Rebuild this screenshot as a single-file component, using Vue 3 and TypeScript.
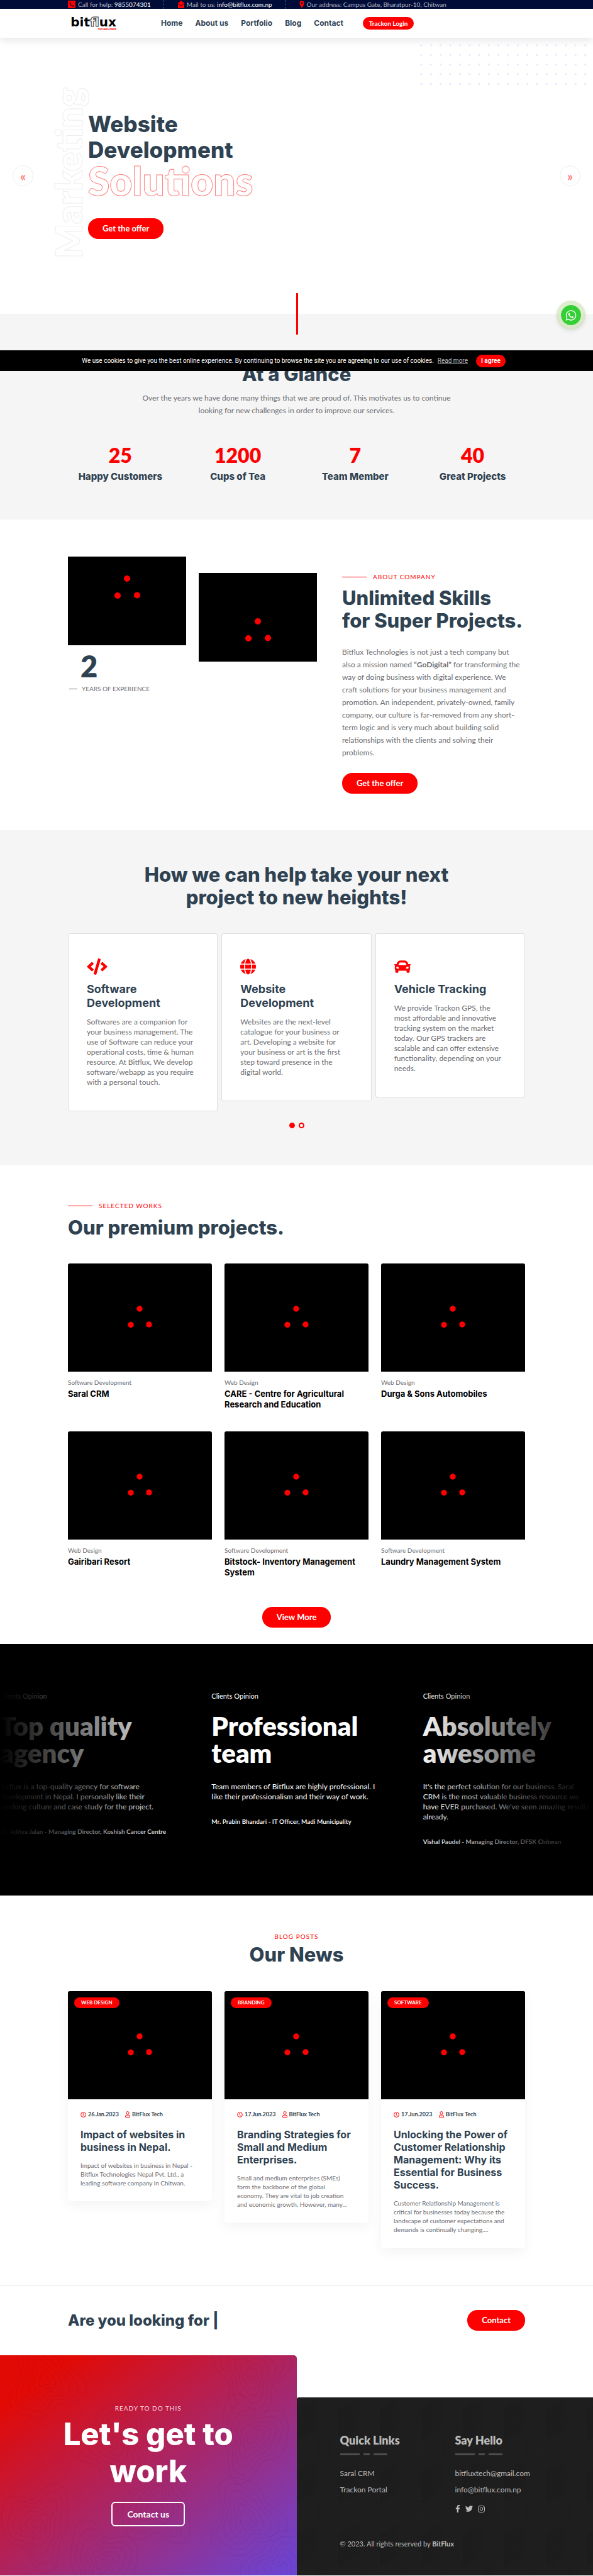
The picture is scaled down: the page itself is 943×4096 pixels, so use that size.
<script setup lang="ts">
interface Project { category: string; title: string[] }
interface Service { icon: string; viewBox: string; width: number; height: number; title: string[]; text: string[] }
interface Post { tag: string; date: string; title: string[]; text: string[] }
interface Quote { title: string[]; text: string[]; author: string }

const navLinks = ['Home', 'About us', 'Portfolio', 'Blog', 'Contact']

const stats = [
  { value: '25', label: 'Happy Customers' },
  { value: '1200', label: 'Cups of Tea' },
  { value: '7', label: 'Team Member' },
  { value: '40', label: 'Great Projects' },
]

const services: Service[] = [
  {
    icon: 'M278.9 511.5l-61-17.7c-6.4-1.8-10-8.5-8.2-14.9L346.2 8.7c1.8-6.4 8.5-10 14.9-8.2l61 17.7c6.4 1.8 10 8.5 8.2 14.9L293.8 503.3c-1.9 6.4-8.5 10.1-14.9 8.2zm-114-112.2l43.5-46.4c4.6-4.9 4.3-12.7-.8-17.2L117 256l90.6-79.7c5.1-4.5 5.5-12.3.8-17.2l-43.5-46.4c-4.5-4.8-12.1-5.1-17-.5L3.8 247.2c-5.1 4.7-5.1 12.8 0 17.5l144.1 135.1c4.9 4.6 12.5 4.4 17-.5zm327.2.6l144.1-135.1c5.1-4.7 5.1-12.8 0-17.5L492.1 112.1c-4.8-4.5-12.4-4.3-17 .5L431.6 159c-4.6 4.9-4.3 12.7.8 17.2L523 256l-90.6 79.7c-5.1 4.5-5.5 12.3-.8 17.2l43.5 46.4c4.5 4.9 12.1 5.1 17 .6z',
    viewBox: '0 0 640 512', width: 33, height: 26,
    title: ['Software', 'Development'],
    text: ['Softwares are a companion for', 'your business management. The', 'use of Software can reduce your', 'operational costs, time & human', 'resource. At Bitflux, We develop', 'software/webapp as you require', 'with a personal touch.'],
  },
  {
    icon: 'M336.5 160C322 70.7 287.8 8 248 8s-74 62.7-88.5 152h177zM152 256c0 22.2 1.2 43.5 3.3 64h185.3c2.1-20.5 3.3-41.8 3.3-64s-1.2-43.5-3.3-64H155.3c-2.1 20.5-3.3 41.8-3.3 64zm324.7-96c-28.6-67.9-86.5-120.4-158-141.6 24.4 33.8 41.2 84.7 50 141.6h108zM177.2 18.4C105.8 39.6 47.8 92.1 19.3 160h108c8.7-56.9 25.5-107.8 49.9-141.6zM487.4 192H372.7c2.1 21 3.3 42.5 3.3 64s-1.2 43-3.3 64h114.6c5.5-20.5 8.6-41.8 8.6-64s-3.1-43.5-8.5-64zM120 256c0-21.5 1.2-43 3.3-64H8.6C3.2 212.5 0 233.8 0 256s3.2 43.5 8.6 64h114.6c-2-21-3.2-42.5-3.2-64zm39.5 96c14.5 89.3 48.7 152 88.5 152s74-62.7 88.5-152h-177zm159.3 141.6c71.4-21.2 129.4-73.7 158-141.6h-108c-8.8 56.9-25.6 107.8-50 141.6zM19.3 352c28.6 67.9 86.5 120.4 158 141.6-24.4-33.8-41.2-84.7-50-141.6h-108z',
    viewBox: '0 0 496 512', width: 25, height: 26,
    title: ['Website', 'Development'],
    text: ['Websites are the next-level', 'catalogue for your business or', 'art. Developing a website for', 'your business or art is the first', 'step toward presence in the', 'digital world.'],
  },
  {
    icon: 'M499.99 176h-59.87l-16.64-41.6C406.38 91.63 365.57 64 319.5 64h-127c-46.06 0-86.88 27.63-103.99 70.4L71.87 176H12.01C4.2 176-1.53 183.34.37 190.91l6 24C7.7 220.25 12.5 224 18.01 224h20.07C24.65 235.73 16 252.78 16 272v48c0 16.12 6.16 30.67 16 41.93V416c0 17.67 14.33 32 32 32h32c17.67 0 32-14.33 32-32v-32h256v32c0 17.67 14.33 32 32 32h32c17.67 0 32-14.33 32-32v-54.07c9.84-11.25 16-25.8 16-41.93v-48c0-19.22-8.65-36.27-22.07-48H494c5.51 0 10.31-3.75 11.64-9.09l6-24c1.89-7.57-3.84-14.91-11.65-14.91zm-352.06-17.83c7.29-18.22 24.94-30.17 44.57-30.17h127c19.63 0 37.28 11.95 44.57 30.17L384 208H128l19.93-49.83zM96 319.8c-19.2 0-32-12.76-32-31.9S76.8 256 96 256s48 28.71 48 47.85-28.8 15.95-48 15.95zm320 0c-19.2 0-48 3.19-48-15.95S396.8 256 416 256s32 12.76 32 31.9-12.8 31.9-32 31.9z',
    viewBox: '0 0 512 512', width: 26, height: 26,
    title: ['Vehicle Tracking'],
    text: ['We provide Trackon GPS, the', 'most affordable and innovative', 'tracking system on the market', 'today. Our GPS trackers are', 'scalable and can offer extensive', 'functionality, depending on your', 'needs.'],
  },
]

const projects: Project[] = [
  { category: 'Software Development', title: ['Saral CRM'] },
  { category: 'Web Design', title: ['CARE - Centre for Agricultural', 'Research and Education'] },
  { category: 'Web Design', title: ['Durga & Sons Automobiles'] },
  { category: 'Web Design', title: ['Gairibari Resort'] },
  { category: 'Software Development', title: ['Bitstock- Inventory Management', 'System'] },
  { category: 'Software Development', title: ['Laundry Management System'] },
]

const quotes: Quote[] = [
  { title: ['Top quality', 'agency'], text: ['Bitflux is a top-quality agency for software', 'development in Nepal. I personally like their', 'working culture and case study for the project.'], author: 'Dr. Aditya Jalan - Managing Director, Koshish Cancer Centre' },
  { title: ['Professional', 'team'], text: ['Team members of Bitflux are highly professional. I', 'like their professionalism and their way of work.'], author: 'Mr. Prabin Bhandari - IT Officer, Madi Municipality' },
  { title: ['Absolutely', 'awesome'], text: ["It's the perfect solution for our business. Saral", 'CRM is the most valuable business resource we', "have EVER purchased. We've seen amazing results", 'already.'], author: 'Vishal Paudel - Managing Director, DFSK Chitwan' },
]

const posts: Post[] = [
  { tag: 'WEB DESIGN', date: '26.Jan.2023', title: ['Impact of websites in', 'business in Nepal.'], text: ['Impact of websites in business in Nepal -', 'Bitflux Technologies Nepal Pvt. Ltd., a', 'leading software company in Chitwan.'] },
  { tag: 'BRANDING', date: '17.Jun.2023', title: ['Branding Strategies for', 'Small and Medium', 'Enterprises.'], text: ['Small and medium enterprises (SMEs)', 'form the backbone of the global', 'economy. They are vital to job creation', 'and economic growth. However, many...'] },
  { tag: 'SOFTWARE', date: '17.Jun.2023', title: ['Unlocking the Power of', 'Customer Relationship', 'Management: Why its', 'Essential for Business', 'Success.'], text: ['Customer Relationship Management is', 'critical for businesses today because the', 'landscape of customer expectations and', 'demands is continually changing....'] },
]

const dots = Array.from({ length: 90 }, (_, i) => ({ x: 2 + (i % 18) * 15.33, y: 2 + Math.floor(i / 18) * 15.33 }))

// Wavy concentric rings that form the contour-map texture of the call panel.
function ring(cx: number, cy: number, r: number, seed: number): string {
  const pts: string[] = []
  for (let i = 0; i <= 48; i++) {
    const a = (i / 48) * Math.PI * 2
    const k = r * (1 + 0.22 * Math.sin(a * 3 + seed) + 0.1 * Math.sin(a * 5 - seed * 2 + r / 20))
    pts.push(`${(cx + k * Math.cos(a)).toFixed(1)} ${(cy + k * 1.15 * Math.sin(a)).toFixed(1)}`)
  }
  return `M${pts.join('L')}Z`
}
const centers = [[70, 40, 1], [400, 30, 3], [180, 140, 5], [400, 130, 2], [60, 270, 4], [250, 240, 6], [390, 260, 1], [160, 330, 2], [450, 340, 5]]
const contours = centers.flatMap(([x, y, s]) => [8, 16, 24, 33, 42, 52].map((r) => ring(x, y, r, s)))
</script>

<template>
  <div class="page">
    <div class="topbar">
      <div class="wrap topbar-row">
        <span class="contact">
          <svg width="12" height="12" viewBox="0 0 12 12"><rect width="12" height="12" rx="1" fill="#f00" /><path d="M3.2 2.4c-.6.4-.7 1.300-.3 2.500.8 2.200 2.200 3.700 4.400 4.600 1 .4 1.900.2 2.200-.5l.2-.7-1.900-.9-.9.8C5.700 7.600 4.900 6.700 4.300 5.300l.8-.8-.8-2.100z" fill="#000c38" /></svg>
          <span>Call for help: <a href="#">9855074301</a></span>
        </span>
        <span class="contact">
          <svg width="10" height="12" viewBox="0 0 10 12"><path d="M0 4 5 0l5 4v7q0 1-1 1H1q-1 0-1-1z" fill="#f00" /><path d="m1 5.500 4 3 4-3" fill="none" stroke="#000c38" /></svg>
          <span>Mail to us: <a href="#">info@bitflux.com.np</a></span>
        </span>
        <span class="contact">
          <svg width="8" height="12" viewBox="0 0 8 12"><path d="M4 12C3 9.500.3 6.500.3 3.900a3.700 3.700 0 0 1 7.400 0C7.700 6.500 5 9.500 4 12z" fill="#f00" /><circle cx="4" cy="3.900" r="1.300" fill="#000c38" /></svg>
          <span>Our address: Campus Gate, Bharatpur-10, Chitwan</span>
        </span>
      </div>
    </div>

    <header class="header">
      <div class="wrap header-row">
        <a class="logo" href="#">
          <span class="logo-name">bit<i>fl</i>ux</span>
          <span class="logo-sub">TECHNOLOGIES</span>
        </a>
        <nav class="nav">
          <a v-for="link in navLinks" :key="link" href="#">{{ link }}</a>
        </nav>
        <a class="login" href="#">Trackon Login</a>
      </div>
    </header>

    <section class="hero">
      <svg class="hero-dots" width="266" height="66" viewBox="0 0 266 66">
        <circle v-for="(d, i) in dots" :key="i" :cx="d.x" :cy="d.y" r="1.700" fill="#ebe9fc" />
      </svg>
      <span class="hero-side">Marketing</span>
      <button class="arrow prev" aria-label="Previous">«</button>
      <button class="arrow next" aria-label="Next">»</button>
      <div class="wrap hero-body">
        <h1>Website<br />Development<span>Solutions</span></h1>
        <a class="btn" href="#">Get the offer</a>
      </div>
      <span class="hero-line"></span>
    </section>

    <section class="glance">
      <div class="wrap">
        <h2>At a Glance</h2>
        <p>Over the years we have done many things that we are proud of. This motivates us to continue<br />looking for new challenges in order to improve our services.</p>
      </div>
      <div class="stats">
        <div v-for="s in stats" :key="s.label">
          <strong>{{ s.value }}</strong>
          <span>{{ s.label }}</span>
        </div>
      </div>
    </section>

    <section class="wrap about">
      <div>
        <div class="shot">
          <svg viewBox="0 0 188 141"><g fill="#f00"><circle cx="94" cy="35" r="5" /><circle cx="79" cy="62" r="5" /><circle cx="110" cy="61.500" r="5" /></g></svg>
        </div>
        <strong class="years">2</strong>
        <span class="years-label">YEARS OF EXPERIENCE</span>
      </div>
      <div class="shot shifted">
        <svg viewBox="0 0 188 141"><g fill="#f00"><circle cx="94" cy="77" r="5" /><circle cx="79" cy="104" r="5" /><circle cx="110" cy="103.500" r="5" /></g></svg>
      </div>
      <div class="about-text">
        <span class="eyebrow lined">ABOUT COMPANY</span>
        <h2>Unlimited Skills<br />for Super Projects.</h2>
        <p>Bitflux Technologies is not just a tech company but<br />also a mission named <b>“GoDigital”</b> for transforming the<br />way of doing business with digital experience. We<br />craft solutions for your business management and<br />promotion. An independent, privately-owned, family<br />company, our culture is far-removed from any short-<br />term logic and is very much about building solid<br />relationships with the clients and solving their<br />problems.</p>
        <a class="btn" href="#">Get the offer</a>
      </div>
    </section>

    <section class="services">
      <div class="wrap">
        <h2>How we can help take your next<br />project to new heights!</h2>
        <div class="cards">
          <article v-for="(s, i) in services" :key="i" class="card">
            <svg :width="s.width" :height="s.height" :viewBox="s.viewBox"><path :d="s.icon" fill="#f00" /></svg>
            <h3><span v-for="l in s.title" :key="l">{{ l }}</span></h3>
            <p><span v-for="l in s.text" :key="l">{{ l }}</span></p>
          </article>
        </div>
        <div class="pager">
          <button class="on" aria-label="Slide 1"></button>
          <button aria-label="Slide 2"></button>
        </div>
      </div>
    </section>

    <section class="wrap projects">
      <span class="eyebrow lined">SELECTED WORKS</span>
      <h2>Our premium projects.</h2>
      <div class="grid">
        <article v-for="p in projects" :key="p.title[0]">
          <div class="thumb">
            <svg viewBox="0 0 229 172"><g fill="#f00"><circle cx="114" cy="72" r="4.700" /><circle cx="100" cy="97.500" r="4.700" /><circle cx="129" cy="97" r="4.700" /></g></svg>
          </div>
          <span class="cat">{{ p.category }}</span>
          <h4><span v-for="l in p.title" :key="l">{{ l }}</span></h4>
        </article>
      </div>
      <div class="more"><a class="btn" href="#">View More</a></div>
    </section>

    <section class="quotes">
      <article v-for="q in quotes" :key="q.author">
        <span class="opinion">Clients Opinion</span>
        <h3><span v-for="l in q.title" :key="l">{{ l }}</span></h3>
        <p><span v-for="l in q.text" :key="l">{{ l }}</span></p>
        <span class="author">{{ q.author }}</span>
      </article>
    </section>

    <section class="wrap news">
      <span class="eyebrow">BLOG POSTS</span>
      <h2>Our News</h2>
      <div class="posts">
        <article v-for="p in posts" :key="p.tag" class="post">
          <div class="thumb">
            <svg viewBox="0 0 229 172"><g fill="#f00"><circle cx="114" cy="72" r="4.700" /><circle cx="100" cy="97.500" r="4.700" /><circle cx="129" cy="97" r="4.700" /></g></svg>
            <span class="tag">{{ p.tag }}</span>
          </div>
          <div class="post-body">
            <div class="meta">
              <svg width="9" height="9" viewBox="0 0 18 18" fill="none" stroke="#f00" stroke-width="2"><circle cx="9" cy="9" r="7.800" /><path d="M8.500 4v5.500l3 3" /></svg>
              <span>{{ p.date }}</span>
              <svg class="who" width="8" height="10" viewBox="0 0 16 20" fill="none" stroke="#f00" stroke-width="2"><circle cx="8" cy="5.500" r="4.300" /><path d="M1 18.800v-2.500a4 4 0 0 1 4-4h6a4 4 0 0 1 4 4v2.500z" /></svg>
              <span>BitFlux Tech</span>
            </div>
            <h3><span v-for="l in p.title" :key="l">{{ l }}</span></h3>
            <p><span v-for="l in p.text" :key="l">{{ l }}</span></p>
          </div>
        </article>
      </div>
    </section>

    <section class="looking">
      <div class="wrap looking-row">
        <h2>Are you looking for |</h2>
        <a class="btn" href="#">Contact</a>
      </div>
    </section>

    <footer class="footer">
      <div class="call">
        <svg class="texture" viewBox="0 0 472 350" preserveAspectRatio="xMidYMid slice">
          <path v-for="(c, i) in contours" :key="i" :d="c" />
        </svg>
        <span class="call-over">READY TO DO THIS</span>
        <h2>Let's get to<br />work</h2>
        <a class="btn-outline" href="#">Contact us</a>
      </div>
      <div class="foot">
        <svg class="texture" aria-hidden="true">
          <defs>
            <linearGradient id="facet" x1="0" x2="1"><stop offset="0" stop-color="#171717" /><stop offset="1" stop-color="#1e1e1e" /></linearGradient>
            <pattern id="hex" width="66" height="100" patternUnits="userSpaceOnUse">
              <path d="M0 18 33 0v50L0 68zM33 68l33-18v50l-33 18z" fill="url(#facet)" opacity=".35" />
            </pattern>
          </defs>
          <rect width="100%" height="100%" fill="url(#hex)" />
        </svg>
        <div class="foot-cols">
          <div>
            <h5>Quick Links</h5>
            <div class="bars"><i></i><i></i><i></i></div>
            <a href="#">Saral CRM</a>
            <a href="#">Trackon Portal</a>
          </div>
          <div>
            <h5>Say Hello</h5>
            <div class="bars"><i></i><i></i><i></i></div>
            <a href="#">bitfluxtech@gmail.com</a>
            <a href="#">info@bitflux.com.np</a>
            <div class="social">
              <a href="#" aria-label="Facebook"><svg width="8" height="12" viewBox="0 0 320 512"><path fill="#bbb" d="M279.14 288l14.22-92.66h-88.91v-60.13c0-25.35 12.42-50.06 52.24-50.06h40.42V6.26S260.43 0 225.36 0c-73.220 0-121.080 44.380-121.080 124.720v70.620H22.890V288h81.390v224h100.170V288z" /></svg></a>
              <a href="#" aria-label="Twitter"><svg width="12" height="12" viewBox="0 0 512 512"><path fill="#bbb" d="M459.37 151.716c.325 4.548.325 9.097.325 13.645 0 138.720-105.583 298.558-298.558 298.558-59.452 0-114.680-17.219-161.137-47.106 8.447.974 16.568 1.299 25.340 1.299 49.055 0 94.213-16.568 130.274-44.832-46.132-.975-84.792-31.188-98.112-72.772 6.498.974 12.995 1.624 19.818 1.624 9.421 0 18.843-1.300 27.614-3.573-48.081-9.747-84.143-51.980-84.143-102.985v-1.299c13.969 7.797 30.214 12.670 47.431 13.319-28.264-18.843-46.781-51.005-46.781-87.391 0-19.492 5.197-37.360 14.294-52.954 51.655 63.675 129.300 105.258 216.365 109.807-1.624-7.797-2.599-15.918-2.599-24.040 0-57.828 46.782-104.934 104.934-104.934 30.213 0 57.502 12.670 76.670 33.137 23.715-4.548 46.456-13.320 66.599-25.340-7.798 24.366-24.366 44.833-46.132 57.827 21.117-2.273 41.584-8.122 60.426-16.243-14.292 20.791-32.161 39.308-52.628 54.253z" /></svg></a>
              <a href="#" aria-label="Instagram"><svg width="11" height="11" viewBox="0 0 22 22" fill="none" stroke="#bbb" stroke-width="2"><rect x="1" y="1" width="20" height="20" rx="5.500" /><circle cx="11" cy="11" r="4.600" /><circle cx="16.800" cy="5.300" r=".6" /></svg></a>
            </div>
          </div>
        </div>
        <p class="copy">© 2023. All rights reserved by <b>BitFlux</b></p>
      </div>
    </footer>

    <div class="cookie">
      <span>We use cookies to give you the best online experience. By continuing to browse the site you are agreeing to our use of cookies.</span>
      <a href="#">Read more</a>
      <button>I agree</button>
    </div>

    <a class="whatsapp" href="#" aria-label="WhatsApp">
      <svg width="18" height="19" viewBox="0 0 448 512">
        <path fill="#fff" d="M380.9 97.1C339 55.1 283.2 32 223.9 32c-122.4 0-222 99.6-222 222 0 39.1 10.2 77.3 29.6 111L0 480l117.7-30.9c32.4 17.7 68.9 27 106.1 27h.1c122.3 0 224.1-99.6 224.1-222 0-59.3-25.200-115-67.100-157zm-157 341.600c-33.200 0-65.700-8.900-94-25.700l-6.700-4-69.800 18.300L72 359.200l-4.400-7c-18.500-29.400-28.200-63.300-28.200-98.200 0-101.700 82.800-184.500 184.600-184.500 49.300 0 95.600 19.200 130.400 54.100 34.800 34.900 56.200 81.200 56.100 130.500 0 101.800-84.900 184.600-186.600 184.600z" />
        <path fill="#fff" d="M118 168c14-20 36-22 44-8l16 44c3 12-16 24-14 34 22 40 54 66 92 80 12-2 20-22 32-20l44 24c16 12-4 36-22 44-36 12-84-8-128-44-46-38-86-104-64-154z" />
      </svg>
    </a>
  </div>
</template>

<style>
body { margin: 0; background: #fff; }
</style>

<style scoped>
.page { position: relative; overflow: hidden; font-family: Lato, "Open Sans", sans-serif; color: #6d6d72; font-size: 11px; line-height: 16px; }
.page * { box-sizing: border-box; }
h1, h2, h3, h4, h5, p { margin: 0; }
h1, h2, h3, h5 { color: #2f4251; font-weight: 800; }
h1, h2, h3, h4 { font-family: Inter, sans-serif; }
h2 { font-size: 31px; line-height: 36px; }
a { color: inherit; text-decoration: none; }
button { font-family: inherit; border: 0; padding: 0; }
svg { display: block; flex: none; }
.wrap { width: 100%; max-width: 727px; margin: 0 auto; }
h3 span, h4 span, p span { display: block; white-space: nowrap; }

.topbar { background: #000c38; color: #b5b8c6; height: 14px; font-size: 10px; line-height: 14px; }
.topbar-row { display: flex; }
.contact { display: flex; align-items: center; gap: 4px; height: 14px; padding: 0 20px 0 22px; white-space: nowrap; }
.contact:first-child { padding-left: 0; }
.contact + .contact { border-left: 1px dashed #555d7c; }
.contact a { color: #fff; }

.header { position: relative; background: #fff; box-shadow: 0 5px 12px rgba(0, 0, 0, 0.09); }
.header-row { display: flex; align-items: center; height: 46px; }
.logo { display: flex; flex-direction: column; align-items: flex-end; margin-right: 71px; width: 77px; }
.logo-name { font-family: "DejaVu Sans", sans-serif; font-weight: 700; font-size: 20px; line-height: 18px; color: #000; }
.logo-name i { font-style: normal; color: #fff; -webkit-text-stroke: 1px #333; }
.logo-sub { font-family: Roboto, sans-serif; font-weight: 700; font-size: 4px; line-height: 5px; color: #f00; }
.nav { display: flex; gap: 20px; font-family: Inter, sans-serif; font-size: 12px; font-weight: 700; color: #2f4251; }
.login { margin-left: 31px; height: 20px; line-height: 20px; padding: 0 10px; border-radius: 10px; background: #f00; color: #fff; font-weight: 700; font-size: 10px; white-space: nowrap; }

.btn { display: inline-block; height: 33px; line-height: 33px; padding: 0 23px; border-radius: 16px; background: #f00; color: #fff; font-size: 13px; font-weight: 700; white-space: nowrap; }

.hero { position: relative; padding: 117px 0 119px; }
.hero-dots { position: absolute; top: 10px; right: 9px; }
.hero-side { position: absolute; left: 78px; top: 79px; writing-mode: vertical-rl; transform: rotate(180deg); font-size: 58px; line-height: 62px; font-weight: 800; color: #fff; -webkit-text-stroke: 1px #ededed; }
.hero-body { padding-left: 32px; }
h1 { font-size: 35px; line-height: 41px; }
h1 span { display: block; font-family: Lato, sans-serif; font-size: 62px; line-height: 57px; color: #fff; -webkit-text-stroke: 1px #ff7f7f; }
.hero-body .btn { display: block; width: max-content; margin-top: 31px; }
.arrow { position: absolute; top: 203px; width: 33px; height: 33px; border: 1px solid #eee; border-radius: 50%; background: #fff; color: #ff7f7f; font-size: 20px; line-height: 24px; font-weight: 700; }
.prev { left: 20px; }
.next { right: 20px; }
.hero-line { position: absolute; z-index: 1; left: 50%; bottom: -33px; width: 3px; height: 66px; margin-left: -1px; background: #f00; }

.glance { background: #f5f5f5; padding: 78px 0 58px; text-align: center; }
.glance p { margin-top: 10px; font-size: 12px; line-height: 20px; white-space: nowrap; }
.stats { display: grid; grid-template-columns: repeat(4, 1fr); max-width: 747px; margin: 42px auto 0; }
.stats strong { display: block; font-size: 32px; line-height: 38px; font-weight: 800; color: #f00; }
.stats span { display: block; margin-top: 5px; font-family: Inter, sans-serif; font-size: 15px; line-height: 20px; font-weight: 800; color: #2f4251; }

.about { display: grid; grid-template-columns: minmax(0, 188fr) minmax(0, 188fr) minmax(0, 311fr); column-gap: 20px; align-items: start; padding: 59px 0 58px; }
.shot { background: #000; aspect-ratio: 4 / 3; }
.shifted { margin-top: 26px; }
.years { display: block; margin: 9px 0 0 20px; font-size: 47px; line-height: 48px; font-weight: 800; color: #2f4251; }
.years-label { display: flex; align-items: center; gap: 7px; margin-top: 6px; padding-left: 2px; font-size: 10px; line-height: 12px; }
.years-label::before { content: ""; width: 13px; height: 1px; background: #6d6d72; }
.about-text { padding: 25px 0 0 20px; white-space: nowrap; }
.eyebrow { display: flex; align-items: center; gap: 10px; color: #f00; font-size: 10px; line-height: 14px; letter-spacing: 1px; }
.lined::before { content: ""; width: 39px; height: 1px; background: #f00; }
.about-text h2 { margin-top: 9px; }
.about-text p { margin: 22px 0; font-size: 12px; line-height: 20px; }

.services { background: #f5f5f5; padding: 53px 0 59px; }
.services h2 { text-align: center; }
.cards { display: grid; grid-template-columns: repeat(3, 1fr); gap: 6px; align-items: start; margin-top: 39px; }
.card { background: #fff; border: 1px solid #dedede; border-radius: 3px; padding: 39px 0 37px 29px; }
.card h3 { margin: 12px 0 11px; font-size: 18px; line-height: 22px; font-weight: 700; }
.card p { font-size: 12px; line-height: 16px; }
.pager { display: flex; justify-content: center; gap: 6px; margin-top: 18px; }
.pager button { width: 9px; height: 9px; border: 2px solid #f00; border-radius: 50%; background: #fff; }
.pager .on { background: #f00; }

.projects { padding: 57px 0 26px; }
.projects h2 { margin: 10px 0 39px; }
.grid { display: grid; grid-template-columns: repeat(3, 1fr); gap: 34px 20px; }
.thumb { position: relative; background: #000; aspect-ratio: 4 / 3; border-radius: 3px 3px 0 0; }
.cat { display: block; margin-top: 10px; font-size: 10px; line-height: 14px; }
h4 { margin-top: 3px; color: #000; font-size: 13px; line-height: 17px; font-weight: 700; }
.more { display: flex; justify-content: center; margin-top: 46px; }

.quotes { position: relative; display: grid; grid-template-columns: repeat(3, minmax(0, 1fr)); column-gap: 66px; padding: 76px 0 79px; background: #000; color: #fff; overflow: hidden; white-space: nowrap; }
.quotes::before, .quotes::after { content: ""; position: absolute; top: 0; bottom: 0; width: 30%; }
.quotes::before { left: 0; background: linear-gradient(to right, #000, transparent); }
.quotes::after { right: 0; background: linear-gradient(to left, #000, transparent); }
.opinion { display: block; font-size: 11px; line-height: 14px; }
.quotes h3 { margin: 19px 0 24px; color: #fff; font-family: Lato, sans-serif; font-size: 42px; line-height: 43px; }
.quotes p { font-size: 12px; line-height: 16px; }
.author { display: block; margin-top: 24px; font-size: 10px; line-height: 14px; font-weight: 600; }

.news { padding: 58px 0 59px; }
.news .eyebrow { justify-content: center; }
.news h2 { margin: 4px 0 40px; text-align: center; }
.posts { display: grid; grid-template-columns: repeat(3, 1fr); gap: 20px; align-items: start; }
.post { border-radius: 4px; background: #fff; box-shadow: 0 7px 20px rgba(0, 0, 0, 0.05); }
.tag { position: absolute; left: 10px; top: 10px; padding: 0 11px; border-radius: 9px; background: #f00; color: #fff; font-size: 8px; line-height: 17px; font-weight: 700; }
.post-body { padding: 17px 0 22px 20px; }
.meta { display: flex; align-items: center; gap: 3px; font-size: 9px; line-height: 14px; font-weight: 700; color: #2f4251; }
.who { margin-left: 7px; }
.post h3 { margin: 15px 0 12px; font-size: 16px; line-height: 20px; font-weight: 700; }
.post p { font-size: 10px; line-height: 14px; }

.looking { border-top: 1px solid #e2e2e2; padding: 39px 0; }
.looking-row { display: flex; justify-content: space-between; align-items: center; }
.looking h2 { font-size: 24px; line-height: 30px; }

.footer { display: grid; grid-template-columns: 1fr 1fr; align-items: end; }
.call { position: relative; display: flex; flex-direction: column; align-items: center; padding: 77px 0 78px; border-radius: 0 5px 0 0; overflow: hidden; background: linear-gradient(to bottom right, #e20a05 12%, #6c44d2 98%); color: #fff; text-align: center; }
.call > *, .foot > * { position: relative; }
.texture { position: absolute !important; inset: 0; width: 100%; height: 100%; }
.call .texture { fill: none; stroke: #300030; stroke-opacity: 0.08; }
.call-over { font-size: 10px; line-height: 14px; letter-spacing: 1px; color: #f7d9e0; }
.call h2 { margin: 5px 0 19px; color: #fff; font-size: 49px; line-height: 59px; }
.btn-outline { height: 39px; line-height: 35px; padding: 0 23px; border: 2px solid #fff; border-radius: 6px; font-size: 14px; font-weight: 700; }
.foot { position: relative; padding: 57px 0 43px 69px; border-radius: 3px 0 0 0; overflow: hidden; background: #1e1e1e; color: #bbb; }
.foot-cols { display: grid; grid-template-columns: 183px 1fr; }
h5 { color: #bbb; font-size: 18px; line-height: 22px; }
.bars { display: flex; gap: 6px; margin: 10px 0 21px; }
.bars i { width: 31px; height: 3px; background: #4d4d4d; }
.bars i:nth-child(2) { width: 10px; }
.bars i:nth-child(3) { width: 22px; }
.foot-cols a { display: block; margin-bottom: 10px; font-size: 12px; line-height: 16px; }
.foot-cols .social { display: flex; align-items: center; gap: 8px; height: 18px; margin-top: 13px; }
.foot-cols .social a { margin: 0; }
.copy { margin-top: 40px; font-size: 11px; line-height: 14px; }

.cookie { position: absolute; z-index: 2; left: 0; right: 0; top: 557px; height: 33px; display: flex; align-items: center; justify-content: center; padding-right: 9px; background: #000; color: #fff; font-family: Roboto, sans-serif; font-size: 10px; white-space: nowrap; }
.cookie a { margin: 0 13px 0 6px; color: #bbb; text-decoration: underline; }
.cookie button { height: 20px; padding: 0 8px; border-radius: 10px; background: #f00; color: #fff; font-size: 10px; font-weight: 700; }
.whatsapp { position: absolute; z-index: 2; right: 12px; top: 478px; width: 46px; height: 46px; display: flex; align-items: center; justify-content: center; border: 7px solid rgba(190, 220, 160, 0.5); border-radius: 50%; background: #33cf35; background-clip: padding-box; box-shadow: 0 3px 6px rgba(0, 0, 0, 0.08); }
</style>
